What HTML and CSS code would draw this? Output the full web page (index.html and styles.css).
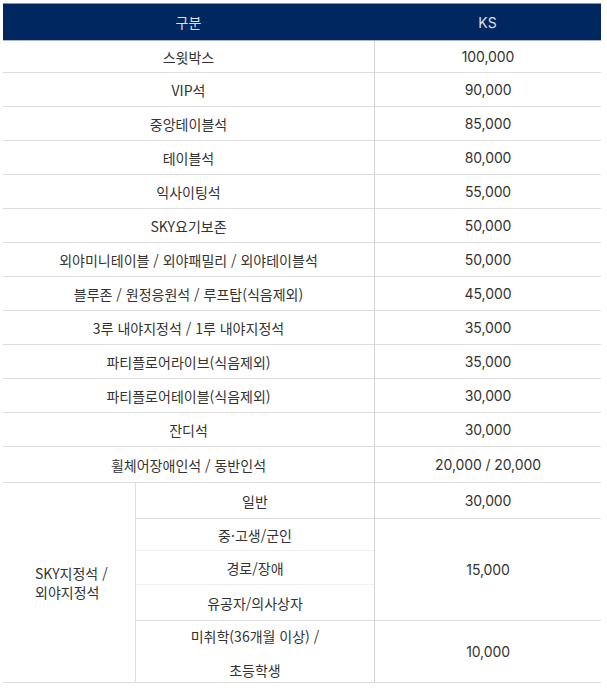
FILE: index.html
```html
<!DOCTYPE html>
<html lang="ko">
<head>
<meta charset="utf-8">
<title>KS 요금표</title>
<link rel="stylesheet" href="styles.css">
</head>
<body>
<div class="price-table">
  <div class="head">
    <div class="h-name">구분</div>
    <div class="h-price">KS</div>
  </div>
  <div class="row r-first"><div class="name">스윗박스</div><div class="price">100,000</div></div>
  <div class="row"><div class="name">VIP석</div><div class="price">90,000</div></div>
  <div class="row"><div class="name">중앙테이블석</div><div class="price">85,000</div></div>
  <div class="row"><div class="name">테이블석</div><div class="price">80,000</div></div>
  <div class="row"><div class="name">익사이팅석</div><div class="price">55,000</div></div>
  <div class="row"><div class="name">SKY요기보존</div><div class="price">50,000</div></div>
  <div class="row"><div class="name">외야미니테이블 / 외야패밀리 / 외야테이블석</div><div class="price">50,000</div></div>
  <div class="row"><div class="name">블루존 / 원정응원석 / 루프탑(식음제외)</div><div class="price">45,000</div></div>
  <div class="row"><div class="name">3루 내야지정석 / 1루 내야지정석</div><div class="price">35,000</div></div>
  <div class="row"><div class="name">파티플로어라이브(식음제외)</div><div class="price">35,000</div></div>
  <div class="row"><div class="name">파티플로어테이블(식음제외)</div><div class="price">30,000</div></div>
  <div class="row"><div class="name">잔디석</div><div class="price">30,000</div></div>
  <div class="row r-last"><div class="name">휠체어장애인석 / 동반인석</div><div class="price">20,000 / 20,000</div></div>
  <div class="group">
    <div class="g-name"><span>SKY지정석 /<br>외야지정석</span></div>
    <div class="g-body">
      <div class="sub s1">일반</div>
      <div class="gp gp1">30,000</div>
      <div class="sub s2 faint">중·고생/군인</div>
      <div class="sub s3 faint">경로/장애</div>
      <div class="sub s4">유공자/의사상자</div>
      <div class="gp gp2">15,000</div>
      <div class="sub s5">미취학(36개월 이상) /<br>초등학생</div>
      <div class="gp gp3">10,000</div>
    </div>
  </div>
</div>
</body>
</html>
```

FILE: styles.css
```css
html, body {
  margin: 0;
  padding: 0;
  background: #ffffff;
}
body {
  font-family: "Noto Sans CJK KR", "Noto Sans", sans-serif;
  font-size: 14px;
  color: #333333;
}
.price-table {
  width: 598px;
  margin: 3px 0 0 3px;
}
.head {
  display: flex;
  height: 36px;
  background: #00275f;
  border-top: 1px solid #8593ad;
  border-bottom: 1px solid #a9b4c8;
  color: #dde1ea;
}
.h-name, .h-price {
  display: flex;
  align-items: center;
  justify-content: center;
}
.h-name { width: 371px; }
.h-price {
  width: 227px;
  font-family: "Inter", "Noto Sans CJK KR", sans-serif;
}
.row {
  display: flex;
  height: 33px;
  border-bottom: 1px solid #dddddd;
}
.row.r-first { height: 31px; }
.row.r-last { height: 35px; }
.name, .price {
  display: flex;
  align-items: center;
  justify-content: center;
  white-space: nowrap;
}
.name { width: 371px; }
.price, .gp {
  font-family: "Inter", "Noto Sans CJK KR", sans-serif;
  letter-spacing: -0.1px;
}
.price {
  width: 226px;
  border-left: 1px solid #d4d4d4;
}
.group {
  display: flex;
  height: 199px;
  border-bottom: 1px solid #dddddd;
}
.g-name {
  width: 132px;
  border-right: 1px solid #dddddd;
  display: flex;
  align-items: center;
}
.g-name span {
  display: block;
  padding-left: 32px;
  line-height: 19px;
  margin-top: 0;
}
.g-body {
  display: grid;
  grid-template-columns: 238px 227px;
  grid-template-rows: 36px 32px 34px 36px 61px;
}
.sub {
  display: flex;
  align-items: center;
  justify-content: center;
  border-bottom: 1px solid #dddddd;
}
.sub.faint { border-bottom-color: #efefef; }
.s1 { grid-column: 1; grid-row: 1; }
.s2 { grid-column: 1; grid-row: 2; }
.s3 { grid-column: 1; grid-row: 3; }
.s4 { grid-column: 1; grid-row: 4; }
.s5 {
  grid-column: 1;
  grid-row: 5;
  border-bottom: none;
  line-height: 34px;
  text-align: center;
  align-items: flex-start;
  margin-top: -2px;
}
.gp {
  display: flex;
  align-items: center;
  justify-content: center;
  border-left: 1px solid #d4d4d4;
  border-bottom: 1px solid #dddddd;
}
.gp1 { grid-column: 2; grid-row: 1; }
.gp2 { grid-column: 2; grid-row: 2 / 5; }
.gp3 { grid-column: 2; grid-row: 5; border-bottom: none; }
```
